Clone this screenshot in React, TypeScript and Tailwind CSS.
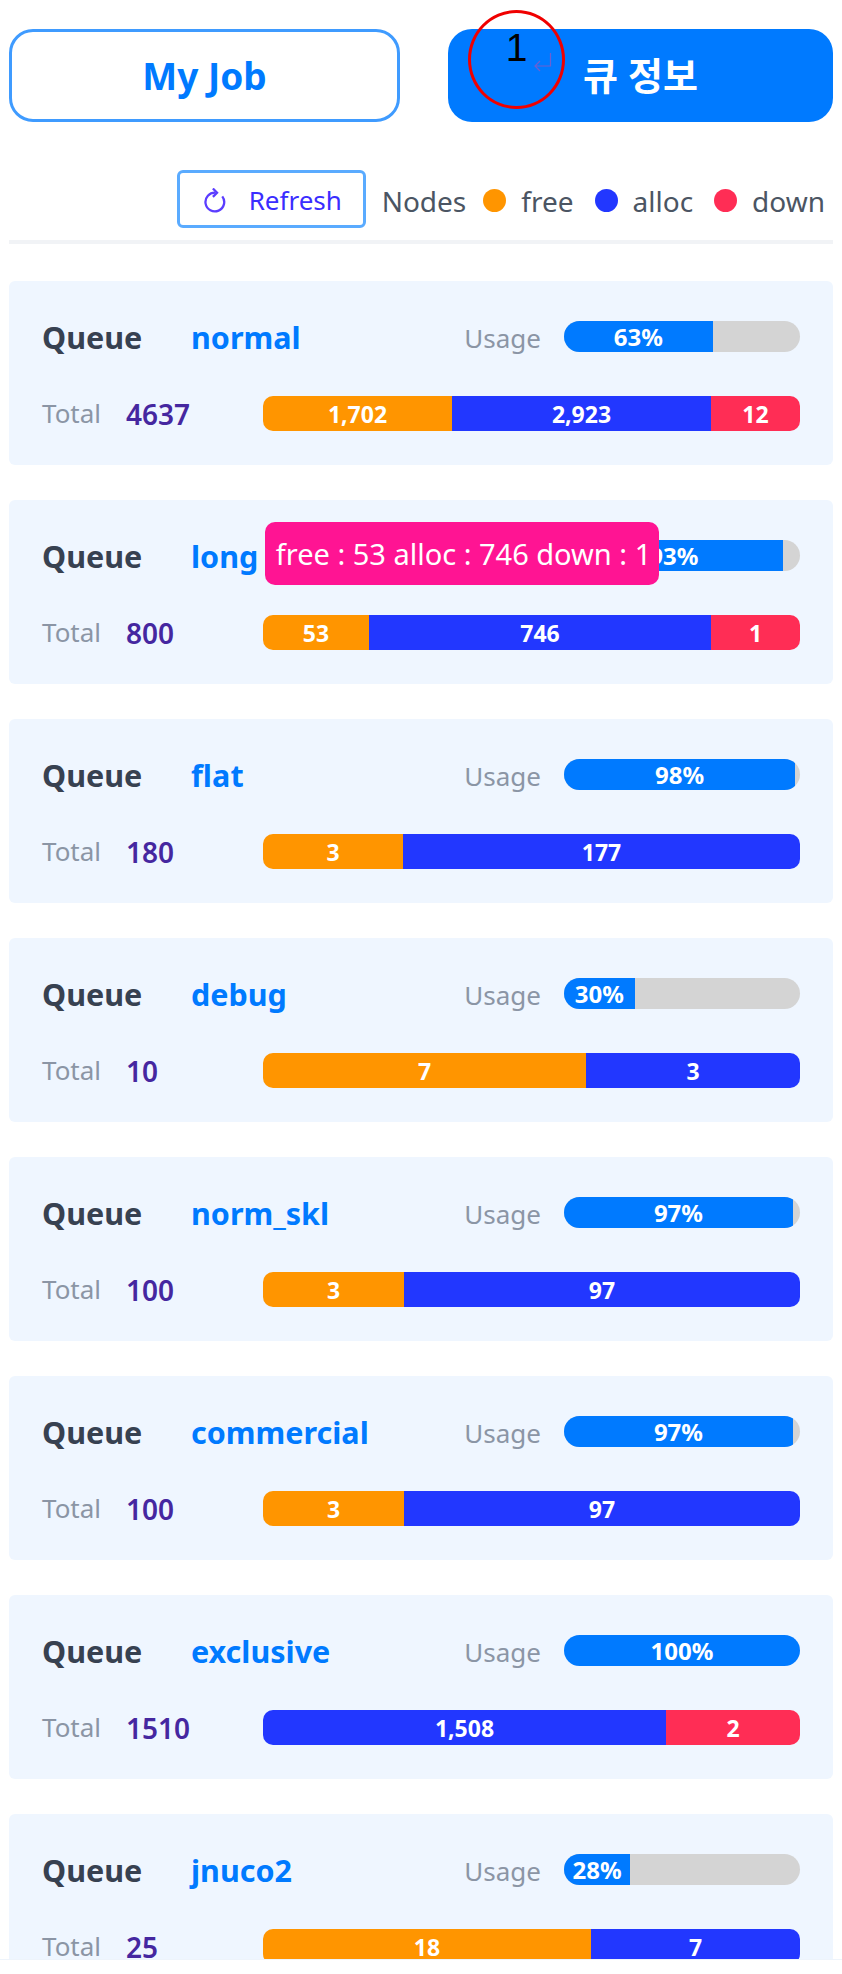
const FONT = "font-['Noto_Sans','Noto_Sans_CJK_KR',sans-serif]";

interface Segment {
  label: string;
  width: number;
  color: string;
}

interface QueueItem {
  name: string;
  usage: number;
  total: number;
  segments: Segment[];
}

const FREE = "bg-[#ff9500]";
const ALLOC = "bg-[#2237ff]";
const DOWN = "bg-[#ff2d55]";

const queues: QueueItem[] = [
  {
    name: "normal",
    usage: 63,
    total: 4637,
    segments: [
      { label: "1,702", width: 189, color: FREE },
      { label: "2,923", width: 259, color: ALLOC },
      { label: "12", width: 89, color: DOWN },
    ],
  },
  {
    name: "long",
    usage: 93,
    total: 800,
    segments: [
      { label: "53", width: 106, color: FREE },
      { label: "746", width: 342, color: ALLOC },
      { label: "1", width: 89, color: DOWN },
    ],
  },
  {
    name: "flat",
    usage: 98,
    total: 180,
    segments: [
      { label: "3", width: 140, color: FREE },
      { label: "177", width: 397, color: ALLOC },
    ],
  },
  {
    name: "debug",
    usage: 30,
    total: 10,
    segments: [
      { label: "7", width: 323, color: FREE },
      { label: "3", width: 214, color: ALLOC },
    ],
  },
  {
    name: "norm_skl",
    usage: 97,
    total: 100,
    segments: [
      { label: "3", width: 141, color: FREE },
      { label: "97", width: 396, color: ALLOC },
    ],
  },
  {
    name: "commercial",
    usage: 97,
    total: 100,
    segments: [
      { label: "3", width: 141, color: FREE },
      { label: "97", width: 396, color: ALLOC },
    ],
  },
  {
    name: "exclusive",
    usage: 100,
    total: 1510,
    segments: [
      { label: "1,508", width: 403, color: ALLOC },
      { label: "2", width: 134, color: DOWN },
    ],
  },
  {
    name: "jnuco2",
    usage: 28,
    total: 25,
    segments: [
      { label: "18", width: 328, color: FREE },
      { label: "7", width: 209, color: ALLOC },
    ],
  },
];

const RefreshIcon = () => (
  <svg viewBox="0 0 24 24" fill="none" className="size-[25px] shrink-0 text-[#5b3dff]" stroke="currentColor" strokeWidth="2.2">
    <path d="M18.5 8a9 9 0 1 1-6.5-3.5" />
    <path d="M9.5 0.5 13.5 4.5 9.5 8.5" />
  </svg>
);

const LegendItem = ({ color, label }: { color: string; label: string }) => (
  <div className="flex items-center gap-[15px]">
    <span className={`size-[23px] rounded-full ${color}`} />
    <span>{label}</span>
  </div>
);

const QueueCard = ({ queue, tooltip }: { queue: QueueItem; tooltip?: string }) => (
  <div className="relative h-[184px] rounded-[6px] bg-[#eff6ff] px-[33px] pt-[40px]">
    <div className="flex h-[31px] items-center">
      <span className="w-[149px] pt-[3px] text-[30.5px] font-bold text-[#374151]">Queue</span>
      <span className="pt-[3px] text-[30.5px] font-bold text-[#007aff]">{queue.name}</span>
      <span className="ml-auto mr-[23px] pt-[3px] text-[26px] text-[#8b95a5]">Usage</span>
      <div className="h-[31px] w-[236px] overflow-hidden rounded-full bg-[#d4d4d4]">
        <div
          className="flex h-full items-center justify-center bg-[#007aff] pt-[1px] text-[24px] font-bold text-white"
          style={{ width: `${queue.usage}%` }}
        >
          {queue.usage}%
        </div>
      </div>
    </div>
    <div className="mt-[44px] flex h-[35px] items-center">
      <span className="w-[84px] text-[26px] text-[#8b95a5]">Total</span>
      <span className="text-[28px] font-semibold text-[#4527a0]">{queue.total}</span>
      <div className="ml-auto flex h-[35px] w-[537px] overflow-hidden rounded-[10px]">
        {queue.segments.map((segment) => (
          <div
            key={segment.label}
            className={`flex h-full items-center justify-center pt-[2px] text-[23px] font-bold text-white ${segment.color}`}
            style={{ width: segment.width }}
          >
            {segment.label}
          </div>
        ))}
      </div>
    </div>
    {tooltip && (
      <div className="absolute left-[256px] top-[22px] flex h-[63px] w-[394px] items-center justify-center rounded-[10px] bg-[#ff1493] pl-[3px] text-[29px] text-white">
        {tooltip}
      </div>
    )}
  </div>
);

export default function App() {
  return (
    <div className={`relative h-[1974px] w-[842px] bg-white ${FONT}`}>
      <div className="h-[1960px] overflow-hidden border-b border-[#eef4fb] px-[9px] pt-[29px]">
        <div className="flex gap-[48px]">
          <button className="h-[93px] flex-1 rounded-[24px] border-[3px] border-[#3f9bff] bg-white text-[37px] font-bold text-[#007aff]">
            My Job
          </button>
          <button className="h-[93px] flex-1 rounded-[24px] bg-[#007aff] text-[38px] font-bold text-white">
            큐 정보
          </button>
        </div>

        <div className="mt-[48px] flex h-[58px] items-center justify-end pr-[8px] text-[28px] text-[#4b5563]">
          <button className="mr-[16px] flex h-[58px] w-[189px] items-center gap-[21px] rounded-[6px] border-[3px] border-[#5aabff] bg-white pl-[23px] pt-[3px] text-[26px] text-[#3a2dff]">
            <RefreshIcon />
            Refresh
          </button>
          <span className="mr-[17px] pt-[3px]">Nodes</span>
          <div className="flex items-center gap-[21px] pt-[3px]">
            <LegendItem color="bg-[#ff9500]" label="free" />
            <LegendItem color="bg-[#2237ff]" label="alloc" />
            <LegendItem color="bg-[#ff2d55]" label="down" />
          </div>
        </div>

        <div className="mt-[12px] h-[4px] bg-[#f1f3f6]" />

        <div className="mt-[37px] flex flex-col gap-[35px]">
          {queues.map((queue) => (
            <QueueCard
              key={queue.name}
              queue={queue}
              tooltip={queue.name === "long" ? "free : 53 alloc : 746 down : 1" : undefined}
            />
          ))}
        </div>
      </div>

      {/* 스크린샷 위에 그려진 주석 표시 */}
      <div className="absolute left-[468px] top-[10px] h-[99px] w-[97px] rounded-[50%] border-[3px] border-[#f00000] pt-[15px] text-center font-['Liberation_Sans',sans-serif] text-[39px] leading-[40px] text-black">
        1
      </div>
      <svg viewBox="0 0 18 20" fill="none" className="absolute left-[534px] top-[53px] h-[20px] w-[18px] text-[#6f5fd0]" stroke="currentColor" strokeWidth="1.2">
        <path d="M16.5 0V13H1M6 8 1 13 6 18" />
      </svg>
    </div>
  );
}
